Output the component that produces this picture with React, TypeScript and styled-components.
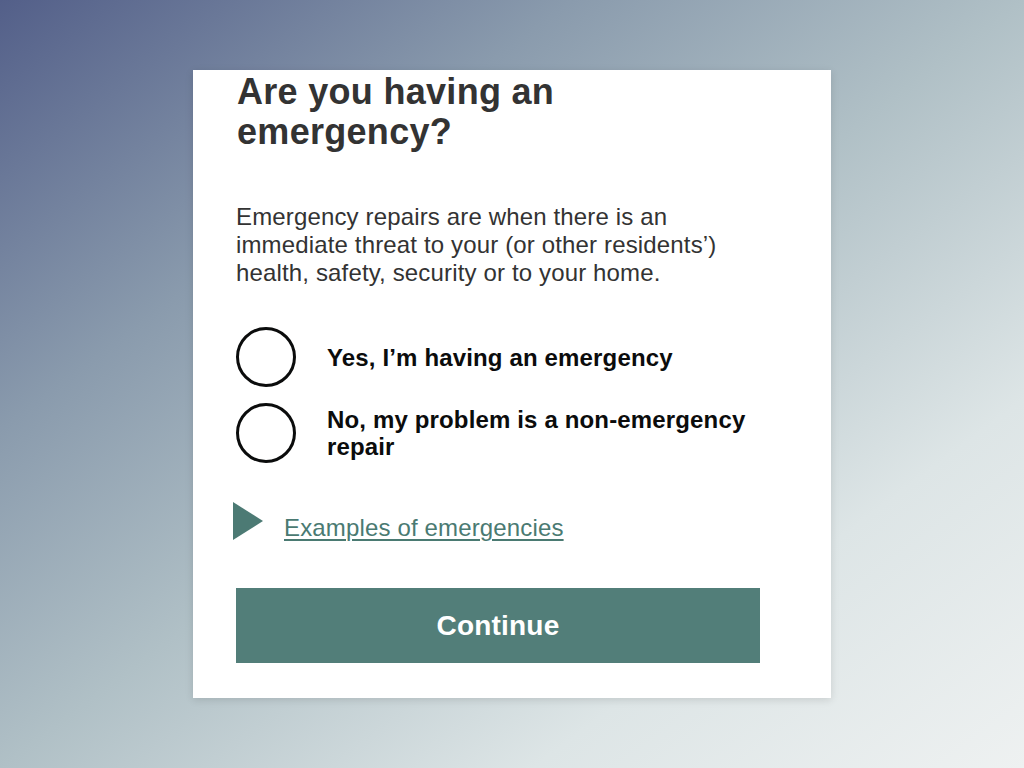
import React, { useState } from 'react';
import styled, { createGlobalStyle } from 'styled-components';

const GlobalStyle = createGlobalStyle`
  html, body {
    margin: 0;
    padding: 0;
    height: 100%;
  }
  body {
    font-family: 'Liberation Sans', Arial, sans-serif;
    letter-spacing: 0.15px;
    background: linear-gradient(
      to bottom right,
      #535f89 0%,
      #8a9bad 28%,
      #b0c0c6 50%,
      #dde5e6 76%,
      #eef1f1 100%
    );
  }
  #root {
    height: 100%;
  }
`;

const Page = styled.div`
  height: 100vh;
  display: flex;
  align-items: center;
  justify-content: center;
`;

const Card = styled.form`
  width: 638px;
  box-sizing: border-box;
  padding: 2px 71px 35px 43px;
  background: #ffffff;
  box-shadow: 0 2px 8px rgba(0, 0, 0, 0.12);
`;

const Heading = styled.h1`
  margin: 0 0 0 1px;
  font-size: 36px;
  line-height: 40px;
  font-weight: 700;
  letter-spacing: 0.3px;
  color: #333333;
`;

const Intro = styled.p`
  margin: 51px 0 40px;
  font-size: 24px;
  line-height: 28px;
  color: #333333;
`;

const RadioGroup = styled.div`
  display: flex;
  flex-direction: column;
  gap: 16px;
`;

const RadioRow = styled.label`
  display: flex;
  align-items: center;
  gap: 31px;
  cursor: pointer;
`;

const Circle = styled.span<{ $checked: boolean }>`
  flex: none;
  width: 60px;
  height: 60px;
  box-sizing: border-box;
  border: 3px solid #0b0c0c;
  border-radius: 50%;
  display: flex;
  align-items: center;
  justify-content: center;

  &::after {
    content: '';
    width: 30px;
    height: 30px;
    border-radius: 50%;
    background: #0b0c0c;
    display: ${p => (p.$checked ? 'block' : 'none')};
  }
`;

const HiddenInput = styled.input`
  position: absolute;
  opacity: 0;
  width: 0;
  height: 0;
`;

const OptionText = styled.span`
  font-size: 24px;
  line-height: 27px;
  font-weight: 700;
  color: #0b0c0c;
`;

const Details = styled.div`
  display: flex;
  align-items: flex-start;
  gap: 21px;
  margin: 39px 0 46px -3px;
`;

const Triangle = styled.span`
  flex: none;
  width: 0;
  height: 0;
  border-top: 19px solid transparent;
  border-bottom: 19px solid transparent;
  border-left: 30px solid #4c7a74;
`;

const SummaryLink = styled.a`
  margin-top: 12px;
  font-size: 24px;
  line-height: 28px;
  color: #4a7a72;
  text-decoration: underline;
  text-underline-offset: 3px;
  text-decoration-thickness: 2px;
  cursor: pointer;
`;

const ContinueButton = styled.button`
  display: block;
  width: 100%;
  height: 75px;
  border: none;
  background: #527e79;
  color: #ffffff;
  font-family: 'Liberation Sans', Arial, sans-serif;
  font-size: 28px;
  font-weight: 700;
  letter-spacing: 0.2px;
  cursor: pointer;
`;

const options = [
  { value: 'yes', label: 'Yes, I’m having an emergency' },
  { value: 'no', label: 'No, my problem is a non-emergency repair' },
];

export default function App() {
  const [choice, setChoice] = useState<string | null>(null);

  return (
    <>
      <GlobalStyle />
      <Page>
        <Card onSubmit={e => e.preventDefault()}>
          <Heading>Are you having an emergency?</Heading>
          <Intro>
            Emergency repairs are when there is an immediate threat to your (or other residents’)
            health, safety, security or to your home.
          </Intro>
          <RadioGroup>
            {options.map(opt => (
              <RadioRow key={opt.value}>
                <HiddenInput
                  type='radio'
                  name='emergency'
                  value={opt.value}
                  checked={choice === opt.value}
                  onChange={() => setChoice(opt.value)}
                />
                <Circle $checked={choice === opt.value} />
                <OptionText>{opt.label}</OptionText>
              </RadioRow>
            ))}
          </RadioGroup>
          <Details>
            <Triangle />
            <SummaryLink>Examples of emergencies</SummaryLink>
          </Details>
          <ContinueButton type='submit'>Continue</ContinueButton>
        </Card>
      </Page>
    </>
  );
}
